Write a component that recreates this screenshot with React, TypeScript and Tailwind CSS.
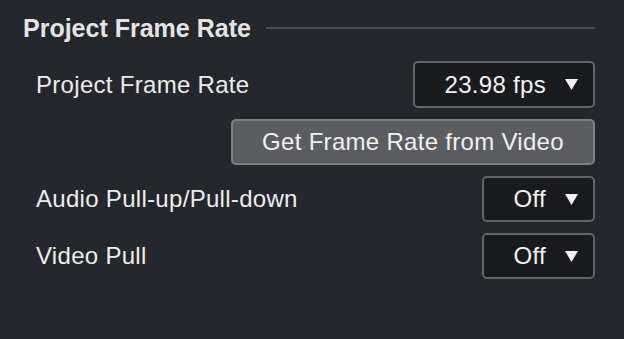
import React from "react";

function Caret() {
  return (
    <svg width="13" height="11" viewBox="0 0 13 11" className="shrink-0">
      <polygon points="0,0 13,0 6.5,11" fill="#f2f2f2" />
    </svg>
  );
}

function Select({ value, width, height }: { value: string; width: string; height: string }) {
  return (
    <div
      className={`${width} ${height} flex items-center justify-end gap-[19px] pr-[15px] rounded-[5px] border-2 border-[#626468] bg-[#1a1b1e] text-[24px] leading-none tracking-[0.3px] text-[#f2f2f2]`}
    >
      <span>{value}</span>
      <Caret />
    </div>
  );
}

function Row({ label, children, height }: { label: string; children: React.ReactNode; height: string }) {
  return (
    <div className={`flex items-center justify-between ${height}`}>
      <span className="pl-[36px] text-[24px] leading-none tracking-[0.3px] text-[#ededed]">{label}</span>
      {children}
    </div>
  );
}

export default function App() {
  return (
    <div
      className="w-[624px] h-[339px] overflow-hidden bg-[#24272b] pr-[29px]"
      style={{ fontFamily: '"Liberation Sans", Arial, Helvetica, sans-serif' }}
    >
      <div className="mt-[13px] h-[30px] flex items-center pl-[23px]">
        <span className="text-[25px] font-bold leading-none text-[#e4e4e4]">Project Frame Rate</span>
        <div className="ml-[15px] flex-1 h-[2px] bg-[#4b4e52]" />
      </div>

      <div className="mt-[18px] flex flex-col gap-[11px]">
        <Row label="Project Frame Rate" height="h-[47px]">
          <Select value="23.98 fps" width="w-[182px]" height="h-[47px]" />
        </Row>
        <div className="flex justify-end h-[46px]">
          <button className="w-[364px] h-[46px] rounded-[5px] border-2 border-[#7d7f83] bg-[#5b5d61] text-[24px] leading-none tracking-[0.3px] text-[#f0f0f0]">
            Get Frame Rate from Video
          </button>
        </div>
        <Row label="Audio Pull-up/Pull-down" height="h-[46px]">
          <Select value="Off" width="w-[113px]" height="h-[46px]" />
        </Row>
        <Row label="Video Pull" height="h-[46px]">
          <Select value="Off" width="w-[113px]" height="h-[46px]" />
        </Row>
      </div>
    </div>
  );
}
